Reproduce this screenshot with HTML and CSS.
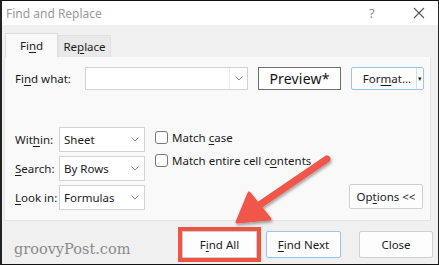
FILE: index.html
```html
<!DOCTYPE html>
<html lang="en">
<head>
  <meta charset="UTF-8">
  <title>Find and Replace</title>
  <link rel="stylesheet" href="styles.css">
</head>
<body>
  <div class="window">
    <div class="titlebar">
      <span class="title">Find and Replace</span>
      <span class="help">?</span>
      <span class="close-x">
        <svg width="12" height="12" viewBox="0 0 12 12"><path d="M1 1L11 11M11 1L1 11" stroke="#555" stroke-width="1.1" fill="none"/></svg>
      </span>
    </div>

    <div class="tabs">
      <div class="tab active"><span>Fi<u>n</u>d</span></div>
      <div class="tab"><span>Re<u>p</u>lace</span></div>
    </div>

    <div class="panel">
      <div class="find-row">
        <span class="label">Fi<u>n</u>d what:</span>
        <div class="combo find-input">
          <span class="chev"><svg width="8" height="5" viewBox="0 0 8 5"><path d="M0.5 0.5L4 4L7.5 0.5" stroke="#8a8a8a" fill="none"/></svg></span>
        </div>
        <div class="btn preview">Preview*</div>
        <div class="btn format">
          <span class="format-text">For<u>m</u>at...</span>
          <span class="split">&#9662;</span>
        </div>
      </div>

      <div class="options-area">
        <div class="selects">
          <div class="select-row">
            <span class="label">Wit<u>h</u>in:</span>
            <div class="combo"><span class="value">Sheet</span><span class="chev"><svg width="8" height="5" viewBox="0 0 8 5"><path d="M0.5 0.5L4 4L7.5 0.5" stroke="#8a8a8a" fill="none"/></svg></span></div>
          </div>
          <div class="select-row">
            <span class="label"><u>S</u>earch:</span>
            <div class="combo"><span class="value">By Rows</span><span class="chev"><svg width="8" height="5" viewBox="0 0 8 5"><path d="M0.5 0.5L4 4L7.5 0.5" stroke="#8a8a8a" fill="none"/></svg></span></div>
          </div>
          <div class="select-row">
            <span class="label"><u>L</u>ook in:</span>
            <div class="combo"><span class="value">Formulas</span><span class="chev"><svg width="8" height="5" viewBox="0 0 8 5"><path d="M0.5 0.5L4 4L7.5 0.5" stroke="#8a8a8a" fill="none"/></svg></span></div>
          </div>
        </div>

        <div class="checks">
          <label class="check"><span class="box"></span><span>Match <u>c</u>ase</span></label>
          <label class="check"><span class="box"></span><span>Match entire cell c<u>o</u>ntents</span></label>
        </div>

        <div class="btn options"><span>Op<u>t</u>ions &lt;&lt;</span></div>
      </div>
    </div>

    <div class="footer">
      <span class="brand">groovyPost.com</span>
      <div class="btn action find-all"><span>F<u>i</u>nd All</span></div>
      <div class="btn action find-next"><span><u>F</u>ind Next</span></div>
      <div class="btn action close">Close</div>
    </div>

    <svg class="arrow" width="439" height="265" viewBox="0 0 439 265">
      <defs>
        <filter id="shadow" x="-20%" y="-20%" width="140%" height="140%">
          <feDropShadow dx="1" dy="2" stdDeviation="1.5" flood-color="#000" flood-opacity="0.35"/>
        </filter>
      </defs>
      <g filter="url(#shadow)" fill="#f0574a" stroke="#f0574a" stroke-linejoin="round">
        <line x1="327" y1="159" x2="258" y2="206" stroke-width="7" stroke-linecap="round"/>
        <polygon points="237,222 249,193 270,219" stroke-width="3"/>
      </g>
    </svg>
  </div>
</body>
</html>
```

FILE: styles.css
```css
* {
  box-sizing: border-box;
}
body {
  margin: 0;
  width: 439px;
  height: 265px;
  overflow: hidden;
  font-family: "Noto Sans", "Open Sans", sans-serif;
  font-size: 11px;
  color: #1b1b1b;
  background: #000;
}
u {
  text-decoration-thickness: 1px;
  text-underline-offset: 2px;
}
.window {
  position: relative;
  width: 439px;
  height: 265px;
  background: #f0f0f0;
  border-top: 1px solid #111;
  border-left: 2px solid #222;
  border-right: 1px solid #222;
  border-bottom: 1px solid #111;
  display: flex;
  flex-direction: column;
}
.titlebar {
  height: 24px;
  background: #fff;
  display: flex;
  align-items: center;
  padding-left: 4px;
}
.title {
  color: #999;
  font-size: 12px;
  flex: 1;
}
.help {
  color: #8c8c8c;
  font-size: 13px;
  width: 44px;
}
.close-x {
  width: 25px;
  display: flex;
  align-items: center;
}
.tabs {
  height: 32px;
  display: flex;
  align-items: flex-end;
  padding-left: 3px;
}
.tab {
  width: 53px;
  height: 22px;
  display: flex;
  align-items: center;
  justify-content: center;
  background: #e9e9e9;
  border: 1px solid #e2e2e2;
  border-bottom: none;
  font-size: 11.5px;
}
.tab.active {
  height: 24px;
  background: #f9f9f9;
  border-color: #dcdcdc;
}
.panel {
  margin-left: 2px;
  width: 427px;
  height: 164px;
  background: #f9f9f9;
  border: 1px solid #e4e4e4;
  border-top: none;
  padding: 10px 0 0 10px;
}
.label {
  font-size: 11.5px;
}
.find-row {
  display: flex;
  align-items: center;
  height: 23px;
}
.find-row .label {
  width: 70px;
}
.combo {
  position: relative;
  background: #fff;
  border: 1px solid #d3d3d3;
  height: 25px;
  width: 86px;
  display: flex;
  align-items: center;
  padding-left: 4px;
  font-size: 11.5px;
}
.combo .value {
  flex: 1;
}
.chev {
  width: 18px;
  height: 100%;
  display: flex;
  align-items: center;
  justify-content: center;
}
.find-input {
  width: 163px;
  height: 23px;
  justify-content: flex-end;
}
.find-input .chev {
  border-left: 1px solid #ececec;
}
.btn {
  display: flex;
  align-items: center;
  justify-content: center;
  background: #fdfdfd;
  border: 1px solid #d0d0d0;
  border-radius: 2px;
  font-size: 11.5px;
}
.preview {
  margin-left: 10px;
  width: 83px;
  height: 23px;
  border: 1px solid #6e6e6e;
  border-radius: 0;
  background: #fff;
  font-size: 14px;
  font-weight: 400;
  letter-spacing: 0.2px;
  color: #111;
}
.format {
  margin-left: 10px;
  width: 73px;
  height: 23px;
  border-color: #9cc4ea;
  justify-content: flex-start;
}
.format-text {
  flex: 1;
  text-align: center;
  padding-left: 6px;
}
.split {
  width: 7px;
  height: 100%;
  border-left: 1px solid #cfdff0;
  font-size: 7px;
  display: flex;
  align-items: center;
  justify-content: center;
}
.options-area {
  margin-top: 37px;
  display: flex;
  align-items: flex-start;
}
.selects {
  display: flex;
  flex-direction: column;
  gap: 4px;
}
.select-row {
  display: flex;
  align-items: center;
}
.select-row .label {
  width: 44px;
}
.checks {
  margin-left: 10px;
  padding-top: 3px;
  display: flex;
  flex-direction: column;
  gap: 9px;
}
.check {
  display: flex;
  align-items: center;
  font-size: 11.5px;
  height: 14px;
}
.box {
  width: 13px;
  height: 13px;
  border: 1px solid #777;
  border-radius: 3px;
  background: #fff;
  margin-right: 4px;
}
.options {
  margin-left: auto;
  margin-right: 7px;
  margin-top: 57px;
  width: 74px;
  height: 25px;
}
.footer {
  flex: 1;
  display: flex;
  align-items: center;
  padding: 4px 0 0 12px;
}
.brand {
  font-family: "DejaVu Serif", "Liberation Serif", serif;
  font-size: 14.5px;
  color: #8a8a8a;
  width: 168px;
  padding-top: 9px;
}
.action {
  width: 75px;
  height: 27px;
  border-color: #cfcfcf;
}
.find-all {
  border-radius: 0;
  outline: 4px solid #ee5443;
  outline-offset: 0;
}
.find-next {
  margin-left: 9px;
  border-color: #9cc4ea;
}
.close {
  margin-left: 18px;
  width: 74px;
}
.arrow {
  position: absolute;
  left: -2px;
  top: -1px;
  pointer-events: none;
}
```
